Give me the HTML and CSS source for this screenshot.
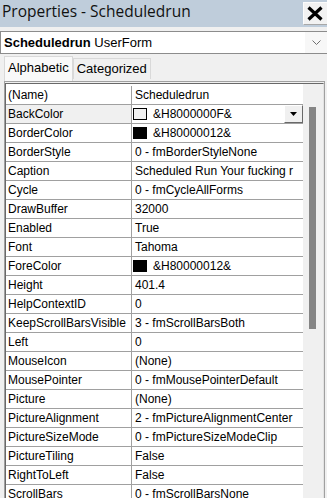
FILE: index.html
```html
<!DOCTYPE html>
<html lang="en">
<head>
    <meta charset="UTF-8">
    <meta name="viewport" content="width=device-width, initial-scale=1.0">
    <title>Properties - Scheduledrun</title>
    <link rel="stylesheet" href="styles.css">
</head>
<body>
    <div class="window">
        <div class="titlebar">
            <span class="title">Properties - Scheduledrun</span>
            <div class="close">
                <svg width="16" height="15" viewBox="0 0 16 15">
                    <path d="M1.5 1.5 L14.5 13.5 M14.5 1.5 L1.5 13.5" stroke="#000" stroke-width="3.2" fill="none"/>
                </svg>
            </div>
        </div>

        <div class="combo">
            <span class="combo-text"><b>Scheduledrun</b> UserForm</span>
            <span class="combo-arrow">
                <svg width="9" height="5" viewBox="0 0 9 5">
                    <path d="M0.5 0.5 L4.5 4.5 L8.5 0.5" stroke="#707070" stroke-width="1" fill="none"/>
                </svg>
            </span>
        </div>

        <div class="tabs">
            <div class="tab active">Alphabetic</div>
            <div class="tab">Categorized</div>
        </div>

        <div class="sheet">
            <div class="sheet-inner">
                <div class="list">
                    <div class="row"><div class="name">(Name)</div><div class="value">Scheduledrun</div></div>
                    <div class="row selected">
                        <div class="name">BackColor</div>
                        <div class="value color">
                            <span class="swatch light"></span>&amp;H8000000F&amp;
                            <span class="drop-btn">
                                <svg width="7" height="4" viewBox="0 0 7 4"><path d="M0 0 H7 L3.5 4 Z" fill="#000"/></svg>
                            </span>
                        </div>
                    </div>
                    <div class="row"><div class="name">BorderColor</div><div class="value color"><span class="swatch dark"></span>&amp;H80000012&amp;</div></div>
                    <div class="row"><div class="name">BorderStyle</div><div class="value">0 - fmBorderStyleNone</div></div>
                    <div class="row"><div class="name">Caption</div><div class="value">Scheduled Run Your fucking r</div></div>
                    <div class="row"><div class="name">Cycle</div><div class="value">0 - fmCycleAllForms</div></div>
                    <div class="row"><div class="name">DrawBuffer</div><div class="value">32000</div></div>
                    <div class="row"><div class="name">Enabled</div><div class="value">True</div></div>
                    <div class="row"><div class="name">Font</div><div class="value">Tahoma</div></div>
                    <div class="row"><div class="name">ForeColor</div><div class="value color"><span class="swatch dark"></span>&amp;H80000012&amp;</div></div>
                    <div class="row"><div class="name">Height</div><div class="value">401.4</div></div>
                    <div class="row"><div class="name">HelpContextID</div><div class="value">0</div></div>
                    <div class="row"><div class="name">KeepScrollBarsVisible</div><div class="value">3 - fmScrollBarsBoth</div></div>
                    <div class="row"><div class="name">Left</div><div class="value">0</div></div>
                    <div class="row"><div class="name">MouseIcon</div><div class="value">(None)</div></div>
                    <div class="row"><div class="name">MousePointer</div><div class="value">0 - fmMousePointerDefault</div></div>
                    <div class="row"><div class="name">Picture</div><div class="value">(None)</div></div>
                    <div class="row"><div class="name">PictureAlignment</div><div class="value">2 - fmPictureAlignmentCenter</div></div>
                    <div class="row"><div class="name">PictureSizeMode</div><div class="value">0 - fmPictureSizeModeClip</div></div>
                    <div class="row"><div class="name">PictureTiling</div><div class="value">False</div></div>
                    <div class="row"><div class="name">RightToLeft</div><div class="value">False</div></div>
                    <div class="row"><div class="name">ScrollBars</div><div class="value">0 - fmScrollBarsNone</div></div>
                </div>
                <div class="vscroll">
                    <div class="thumb"></div>
                </div>
            </div>
        </div>
    </div>
</body>
</html>
```

FILE: styles.css
```css
body {
    margin: 0;
    padding: 0;
    background-color: #f0f0f0;
    color: #000;
    font-family: "Liberation Sans", Arial, sans-serif;
    font-size: 12px;
    overflow: hidden;
}

.window {
    width: 327px;
    height: 498px;
    overflow: hidden;
}

.titlebar {
    height: 27px;
    background-color: #bfcddb;
    display: flex;
    align-items: flex-start;
    justify-content: space-between;
}

.title {
    font-family: "Open Sans", sans-serif;
    font-size: 15.5px;
    line-height: 22px;
    padding-left: 2px;
    color: #111;
}

.close {
    margin-top: 2px;
    width: 24px;
    height: 23px;
    box-sizing: border-box;
    background-color: #f2f2f2;
    border-top: 1px solid #fcfcfc;
    border-left: 1px solid #fcfcfc;
    border-bottom: 1px solid #a8a8a8;
    display: flex;
    align-items: center;
    justify-content: center;
    padding-right: 2px;
}

.combo {
    margin-top: 4px;
    height: 23px;
    box-sizing: border-box;
    border: 1px solid #8c8c8c;
    border-right: none;
    background-color: #fff;
    display: flex;
    align-items: center;
    justify-content: space-between;
}

.combo-text {
    padding-left: 3px;
    font-size: 13px;
}

.combo-arrow {
    width: 22px;
    height: 21px;
    background-color: #f7f7f7;
    display: flex;
    align-items: center;
    justify-content: center;
}

.tabs {
    height: 27px;
    padding-left: 4px;
    display: flex;
    align-items: flex-end;
}

.tab {
    height: 21px;
    box-sizing: border-box;
    padding: 0 3px;
    border: 1px solid #d9d9d9;
    border-bottom: none;
    background-color: #f0f0f0;
    font-size: 13px;
    line-height: 20px;
    margin-bottom: 2px;
}

.tab.active {
    height: 25px;
    margin-bottom: 0;
    padding: 0 3px;
    background-color: #f9f9f9;
    line-height: 22px;
}

.sheet {
    margin-left: 4px;
    margin-right: 2px;
    border-top: 1px solid #a0a0a0;
    border-left: 1px solid #a0a0a0;
    border-right: 1px solid #a0a0a0;
    height: 420px;
}

.sheet-inner {
    margin-top: 1px;
    border-top: 1px solid #696969;
    border-left: 1px solid #696969;
    border-right: 1px solid #e3e3e3;
    display: flex;
    height: 100%;
    background-color: #fff;
}

.list {
    width: 297px;
    padding-top: 2px;
}

.row {
    display: grid;
    grid-template-columns: 126px 1fr;
    height: 19px;
    box-sizing: border-box;
    border-bottom: 1px solid #a0a0a0;
    line-height: 18px;
}

.name {
    padding-left: 2px;
    border-right: 1px solid #a0a0a0;
    white-space: nowrap;
    overflow: hidden;
}

.selected .name {
    background-color: #f0f0f0;
}

.value {
    padding-left: 3px;
    white-space: nowrap;
    overflow: hidden;
}

.value.color {
    padding-left: 1px;
    display: flex;
    align-items: center;
}

.swatch {
    width: 14px;
    height: 12px;
    box-sizing: border-box;
    margin-right: 6px;
    flex-shrink: 0;
}

.swatch.light {
    background-color: #f0f0f0;
    border: 1px solid #000;
}

.swatch.dark {
    background-color: #000;
}

.drop-btn {
    margin-left: auto;
    width: 19px;
    height: 18px;
    box-sizing: border-box;
    background-color: #f0f0f0;
    border-top: 1px solid #fff;
    border-left: 1px solid #fff;
    border-right: 1px solid #696969;
    border-bottom: 1px solid #696969;
    display: flex;
    align-items: center;
    justify-content: center;
}

.vscroll {
    width: 20px;
    background-color: #f0f0f0;
    padding-top: 23px;
}

.thumb {
    width: 7px;
    height: 222px;
    margin-left: 6px;
    background-color: #858585;
}
```
